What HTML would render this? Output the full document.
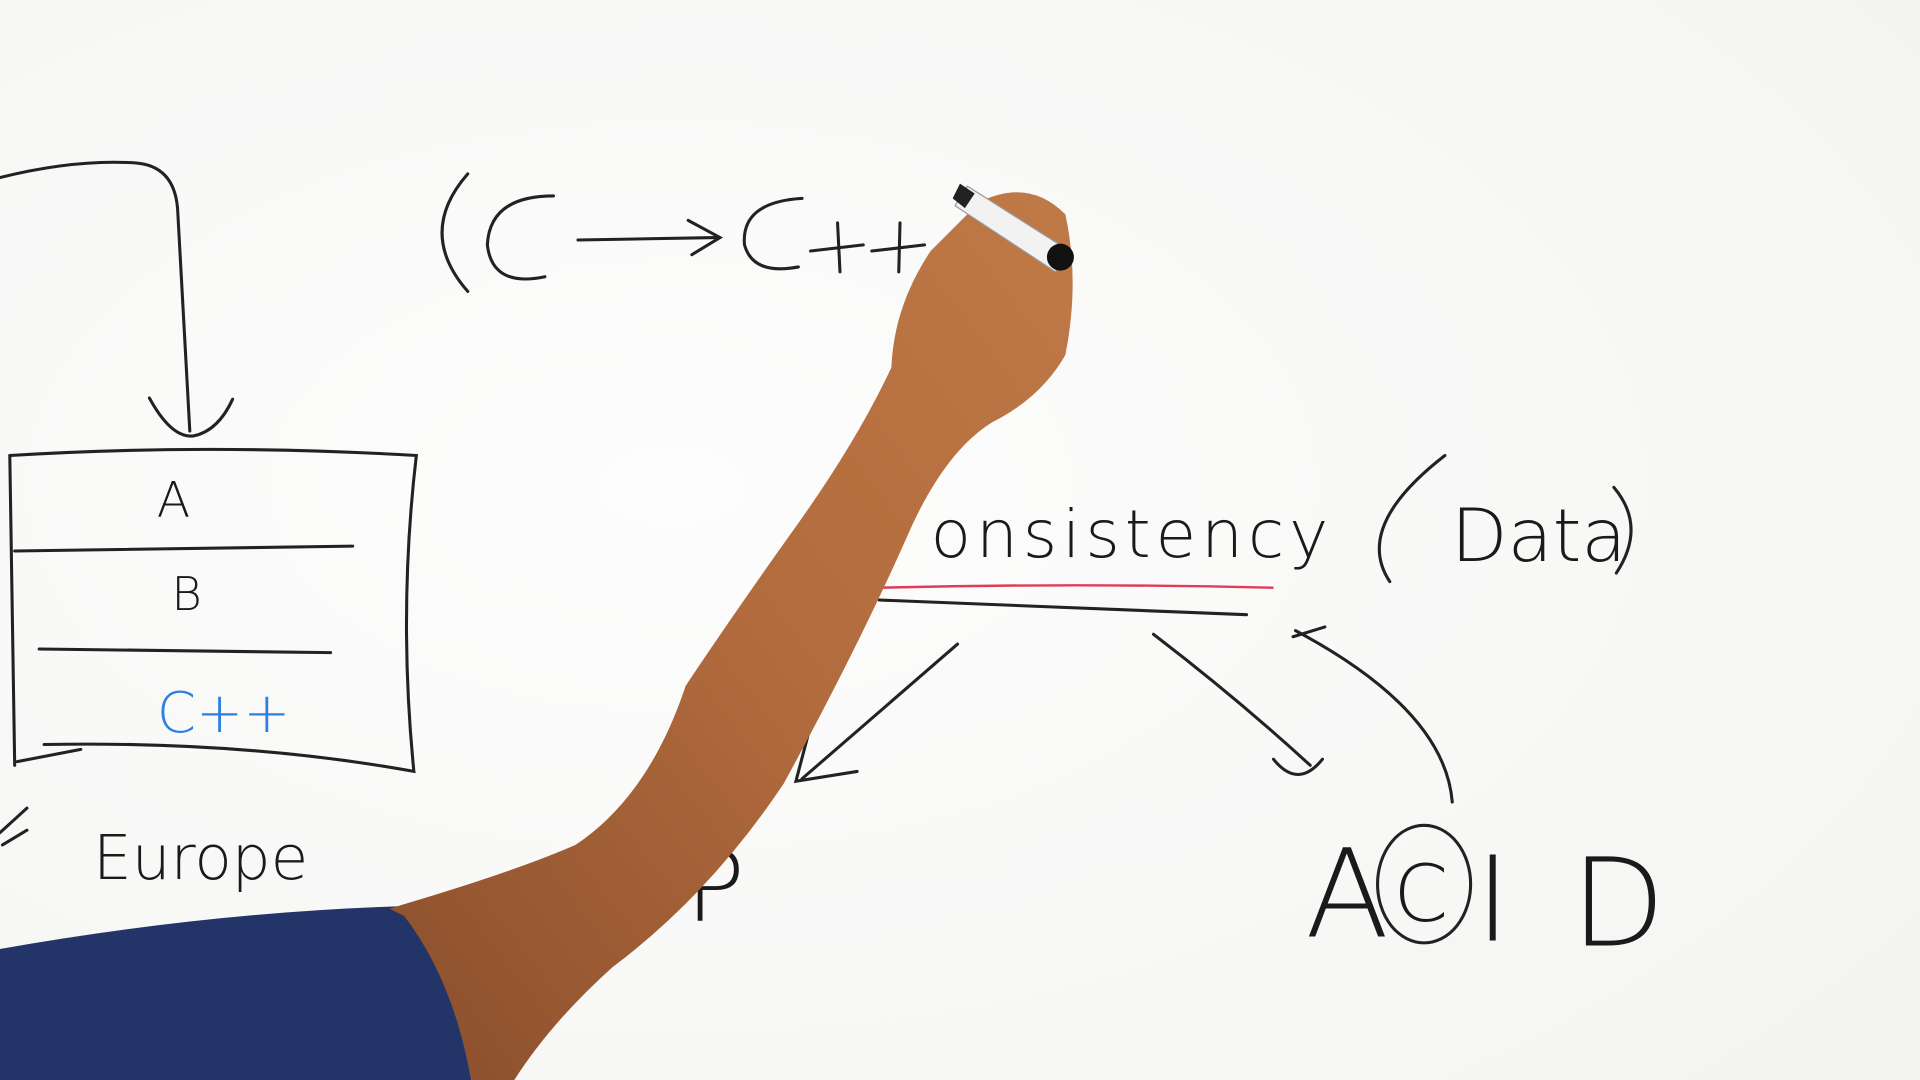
<!DOCTYPE html>
<html><head><meta charset="utf-8">
<style>
html,body{margin:0;padding:0;width:1920px;height:1080px;overflow:hidden;background:#fbfbfb}
svg{display:block}
text{font-family:"DejaVu Sans","Liberation Sans",sans-serif;fill:#1a1a1a;font-weight:300}
</style></head><body>
<svg width="1920" height="1080" viewBox="0 0 1568 882" preserveAspectRatio="none" xmlns="http://www.w3.org/2000/svg">
<defs>
<radialGradient id="bg" cx="0.35" cy="0.45" r="0.9">
<stop offset="0" stop-color="#fdfdfd"/><stop offset="1" stop-color="#f3f3f1"/>
</radialGradient>
<linearGradient id="arm" x1="0" y1="1" x2="1" y2="0">
<stop offset="0" stop-color="#8a4e2c"/><stop offset="0.5" stop-color="#b06a3c"/><stop offset="1" stop-color="#c07a48"/>
</linearGradient>
</defs>
<rect width="1568" height="882" fill="url(#bg)"/>
<g fill="none" stroke="#222" stroke-width="2.5" stroke-linecap="round">
<path d="M0 145 Q60 130 110 133 Q142 135 145 170 L155 352"/>
<path d="M122 325 Q140 358 158 356 Q178 352 190 326"/>
<path d="M8 372 Q170 362 340 372 Q325 500 338 630 Q200 605 36 608"/>
<path d="M8 372 L12 625"/>
<path d="M12 450 L288 446"/>
<path d="M32 530 L270 533"/>
<path d="M14 622 L66 612"/>
<path d="M382 142 Q340 190 382 238"/>
<path d="M452 160 Q400 160 398 200 Q402 235 445 226"/>
<path d="M472 196 L585 194"/>
<path d="M562 180 L588 194 L565 208"/>
<path d="M655 162 Q605 165 608 200 Q615 225 652 218"/>
<path d="M662 205 L705 200 M684 182 L686 222"/>
<path d="M712 205 L755 200 M735 182 L734 222"/>
<path d="M1180 372 Q1105 430 1135 475"/>
<path d="M1318 398 Q1345 430 1320 468"/>
<path d="M718 490 L1018 502"/>
<path d="M782 526 L655 636"/>
<path d="M660 600 L650 638 L700 630"/>
<path d="M942 518 Q1010 570 1070 625"/>
<path d="M1040 620 Q1060 645 1080 620"/>
<path d="M1186 655 Q1180 580 1058 515"/>
<path d="M1056 520 L1082 512"/>
<ellipse cx="1163" cy="722" rx="38" ry="48"/>
<path d="M0 680 L22 660 M2 690 L22 678"/>
</g>
<path d="M718 480 Q880 476 1040 480" stroke="#e03c5a" stroke-width="2" fill="none"/>
<text x="128" y="422" font-size="40">A</text>
<text x="140" y="498" font-size="38">B</text>
<text x="128" y="598" font-size="46" style="fill:#2d7fe0">C++</text>
<text x="76" y="718" font-size="50">Europe</text>
<text x="760" y="455" font-size="54" letter-spacing="4">onsistency</text>
<text x="1185" y="458" font-size="60">Data</text>
<text x="1066" y="765" font-size="100">A</text>
<text x="1138" y="752" font-size="64">C</text>
<text x="1205" y="768" font-size="96">I</text>
<text x="1283" y="772" font-size="100">D</text>
<text x="560" y="752" font-size="80">P</text>
<path d="M0 775 Q170 745 330 740 Q370 800 385 882 L0 882 Z" fill="#233468"/>
<path d="M318 742 Q420 712 470 690 Q530 650 560 560 Q600 500 650 430 Q700 360 728 300 Q730 250 760 205 L800 165 Q840 145 870 175 Q882 230 870 290 Q850 325 810 345 Q770 370 740 440 Q700 530 640 640 Q580 730 500 790 Q450 835 420 882 L385 882 Q370 800 330 748 Z" fill="url(#arm)"/>
<path d="M790 152 L872 204 L862 222 L780 168 Z" fill="#f2f2f2" stroke="#999" stroke-width="1"/>
<circle cx="866" cy="210" r="11" fill="#111"/>
<path d="M784 150 L796 158 L788 170 L778 162 Z" fill="#222"/>
</svg>
</body></html>
